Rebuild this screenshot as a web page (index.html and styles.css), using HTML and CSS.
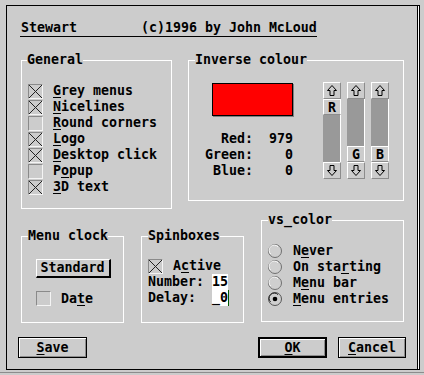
FILE: index.html
```html
<!DOCTYPE html>
<html>
<head>
<meta charset="utf-8">
<link rel="stylesheet" href="styles.css">
</head>
<body>
<div class="screen">
  <div class="dialog">
    <div class="title">Stewart        (c)1996 by John McLoud</div>

    <div class="row1">
      <fieldset class="grp general">
        <legend class="lg lg-general">General</legend>
        <div class="body general-body">
          <div class="item"><span class="cb"><svg class="x" width="13" height="13" viewBox="0 0 13 13"><path d="M0 0L13 13M13 0L0 13" stroke="#222" stroke-width="1"/></svg></span><span><u class="k">G</u>rey menus</span></div>
          <div class="item"><span class="cb"><svg class="x" width="13" height="13" viewBox="0 0 13 13"><path d="M0 0L13 13M13 0L0 13" stroke="#222" stroke-width="1"/></svg></span><span><u class="k">N</u>icelines</span></div>
          <div class="item"><span class="cb"></span><span><u class="k">R</u>ound corners</span></div>
          <div class="item"><span class="cb"><svg class="x" width="13" height="13" viewBox="0 0 13 13"><path d="M0 0L13 13M13 0L0 13" stroke="#222" stroke-width="1"/></svg></span><span><u class="k">L</u>ogo</span></div>
          <div class="item"><span class="cb"><svg class="x" width="13" height="13" viewBox="0 0 13 13"><path d="M0 0L13 13M13 0L0 13" stroke="#222" stroke-width="1"/></svg></span><span><u class="k">D</u>esktop click</span></div>
          <div class="item"><span class="cb"></span><span>P<u class="k">o</u>pup</span></div>
          <div class="item"><span class="cb"><svg class="x" width="13" height="13" viewBox="0 0 13 13"><path d="M0 0L13 13M13 0L0 13" stroke="#222" stroke-width="1"/></svg></span><span><u class="k">3</u>D text</span></div>
        </div>
      </fieldset>

      <fieldset class="grp inverse">
        <legend class="lg lg-inverse">Inverse colour</legend>
        <div class="body inverse-body">
          <div class="colinfo">
            <div class="swatch"></div>
            <div class="values">
              <div class="vline">  Red:  979</div>
              <div class="vline">Green:    0</div>
              <div class="vline"> Blue:    0</div>
            </div>
          </div>
          <div class="sliders">
            <div class="slider">
              <div class="arr"><svg width="10" height="11" viewBox="0 0 10 11"><path d="M5 0.5L9.5 5.5L7 5.5L7 10.5L3 10.5L3 5.5L0.5 5.5Z" fill="none" stroke="#000"/></svg></div>
              <div class="track">
                <div class="thumb">R</div>
                <div class="fill"></div>
              </div>
              <div class="arr"><svg width="10" height="11" viewBox="0 0 10 11"><path d="M5 10.5L9.5 5.5L7 5.5L7 0.5L3 0.5L3 5.5L0.5 5.5Z" fill="none" stroke="#000"/></svg></div>
            </div>
            <div class="slider">
              <div class="arr"><svg width="10" height="11" viewBox="0 0 10 11"><path d="M5 0.5L9.5 5.5L7 5.5L7 10.5L3 10.5L3 5.5L0.5 5.5Z" fill="none" stroke="#000"/></svg></div>
              <div class="track">
                <div class="fill"></div>
                <div class="thumb">G</div>
              </div>
              <div class="arr"><svg width="10" height="11" viewBox="0 0 10 11"><path d="M5 10.5L9.5 5.5L7 5.5L7 0.5L3 0.5L3 5.5L0.5 5.5Z" fill="none" stroke="#000"/></svg></div>
            </div>
            <div class="slider">
              <div class="arr"><svg width="10" height="11" viewBox="0 0 10 11"><path d="M5 0.5L9.5 5.5L7 5.5L7 10.5L3 10.5L3 5.5L0.5 5.5Z" fill="none" stroke="#000"/></svg></div>
              <div class="track">
                <div class="fill"></div>
                <div class="thumb">B</div>
              </div>
              <div class="arr"><svg width="10" height="11" viewBox="0 0 10 11"><path d="M5 10.5L9.5 5.5L7 5.5L7 0.5L3 0.5L3 5.5L0.5 5.5Z" fill="none" stroke="#000"/></svg></div>
            </div>
          </div>
        </div>
      </fieldset>
    </div>

    <div class="row2">
      <fieldset class="grp clock">
        <legend class="lg lg-clock">Menu clock</legend>
        <div class="body clock-body">
          <div class="std">Standard</div>
          <div class="item date"><span class="cb"></span><span>Da<u class="k">t</u>e</span></div>
        </div>
      </fieldset>

      <fieldset class="grp spin">
        <legend class="lg lg-spin">Spinboxes</legend>
        <div class="body spin-body">
          <div class="item"><span class="cb"><svg class="x" width="13" height="13" viewBox="0 0 13 13"><path d="M0 0L13 13M13 0L0 13" stroke="#222" stroke-width="1"/></svg></span><span>A<u class="k">c</u>tive</span></div>
          <div class="fline"><span class="flabel">Number: </span><span class="fld">15</span></div>
          <div class="fline"><span class="flabel">Delay:  </span><span class="fld cursor">_0</span></div>
        </div>
      </fieldset>

      <fieldset class="grp vs">
        <legend class="lg lg-vs">vs_color</legend>
        <div class="body vs-body">
          <div class="ritem"><svg class="radio" width="14" height="14" viewBox="0 0 14 14"><circle cx="7" cy="7" r="6.5" fill="#cfcfcf" stroke="#6f6f6f"/><path d="M2.6 10A5.2 5.2 0 0 1 10 2.6" fill="none" stroke="#fff"/></svg><span>N<u class="k">e</u>ver</span></div>
          <div class="ritem"><svg class="radio" width="14" height="14" viewBox="0 0 14 14"><circle cx="7" cy="7" r="6.5" fill="#cfcfcf" stroke="#6f6f6f"/><path d="M2.6 10A5.2 5.2 0 0 1 10 2.6" fill="none" stroke="#fff"/></svg><span>On sta<u class="k">r</u>ting</span></div>
          <div class="ritem"><svg class="radio" width="14" height="14" viewBox="0 0 14 14"><circle cx="7" cy="7" r="6.5" fill="#cfcfcf" stroke="#6f6f6f"/><path d="M2.6 10A5.2 5.2 0 0 1 10 2.6" fill="none" stroke="#fff"/></svg><span>M<u class="k">e</u>nu bar</span></div>
          <div class="ritem"><svg class="radio" width="14" height="14" viewBox="0 0 14 14"><circle cx="7" cy="7" r="6.5" fill="#cfcfcf" stroke="#555"/><path d="M2.6 10A5.2 5.2 0 0 1 10 2.6" fill="none" stroke="#222"/><circle cx="7" cy="7" r="2.3" fill="#000"/></svg><span><u class="k">M</u>enu entries</span></div>
        </div>
      </fieldset>
    </div>

    <div class="buttons">
      <div class="btn save"><span><u class="k">S</u>ave</span></div>
      <div class="btn ok"><span><u class="k">O</u>K</span></div>
      <div class="btn cancel"><span><u class="k">C</u>ancel</span></div>
    </div>
  </div>
</div>
</body>
</html>
```

FILE: styles.css
```css
html, body {
  margin: 0;
  padding: 0;
  background: #cccccc;
}

body {
  font: bold 13.29px/16px "DejaVu Sans Mono", "Liberation Mono", monospace;
  color: #000;
}

.screen {
  width: 424px;
  height: 373px;
  box-sizing: border-box;
  padding: 5px 0 0 6px;
  border-bottom: 1px solid #8c8c8c;
}

.dialog {
  width: 414px;
  height: 365px;
  box-sizing: border-box;
  border: 1px solid #000;
  box-shadow: inset -1px 0 0 #fff, inset -2px 0 0 #000;
}

.title {
  margin: 14px 0 0 13px;
  width: 296px;
  height: 16px;
  padding-left: 1px;
  white-space: pre;
  border-bottom: 1px solid #000;
}

.k {
  text-decoration: underline;
  text-decoration-thickness: 1px;
  text-underline-offset: 2px;
}

/* group boxes */
.grp {
  margin: 0;
  padding: 0;
  min-width: 0;
  border: 1px solid #fff;
  box-sizing: border-box;
}

.lg {
  padding: 0;
  line-height: 16px;
  white-space: pre;
}

.lg-general { margin-left: 5px; }
.lg-inverse { margin-left: 6px; }
.lg-clock { margin-left: 6px; }
.lg-spin { margin-left: 6px; }
.lg-vs { margin-left: 6px; }

.row1 {
  display: flex;
  align-items: flex-start;
  margin-top: 15px;
  padding-left: 14px;
  gap: 16px;
}

.general { width: 151px; }
.general-body { padding: 15px 0 13px 6px; }

.item {
  display: flex;
  align-items: flex-start;
  height: 16px;
  white-space: pre;
}

.cb {
  display: block;
  width: 15px;
  height: 15px;
  box-sizing: border-box;
  margin-top: 1px;
  margin-right: 10px;
  border-top: 1px solid #8a8a8a;
  border-left: 1px solid #8a8a8a;
  border-right: 1px solid #f4f4f4;
  border-bottom: 1px solid #f4f4f4;
  flex: none;
}

.x {
  display: block;
  shape-rendering: crispEdges;
}

.inverse { width: 216px; }
.inverse-body {
  display: flex;
  align-items: flex-start;
}

.colinfo {
  padding: 15px 0 21px 16px;
}

.swatch {
  margin-left: 7px;
  width: 81px;
  height: 33px;
  box-sizing: border-box;
  background: #ff0000;
  border: 1px solid #000;
  box-shadow: 1px 1px 0 #808080;
}

.values {
  margin-top: 15px;
}

.vline {
  height: 16px;
  white-space: pre;
}

.sliders {
  display: flex;
  gap: 6px;
  margin-left: 30px;
  padding-top: 14px;
}

.slider {
  display: flex;
  flex-direction: column;
  width: 18px;
}

.arr {
  height: 17px;
  box-sizing: border-box;
  display: flex;
  align-items: center;
  justify-content: center;
  border-top: 1px solid #fff;
  border-left: 1px solid #fff;
  border-right: 1px solid #8c8c8c;
  border-bottom: 1px solid #8c8c8c;
  background: #cccccc;
}

.track {
  height: 63px;
  display: flex;
  flex-direction: column;
}

.fill {
  flex: 1;
  background: #999999;
  border-right: 1px solid #fff;
}

.thumb {
  height: 16px;
  box-sizing: border-box;
  text-align: center;
  line-height: 15px;
  border-top: 1px solid #fff;
  border-left: 1px solid #fff;
  border-right: 1px solid #fff;
  border-bottom: 1px solid #8c8c8c;
  background: #cccccc;
}

/* row 2 */
.row2 {
  display: flex;
  align-items: flex-start;
  padding-left: 14px;
}

.clock {
  width: 103px;
  margin-top: 19px;
}

.clock-body {
  padding: 15px 0 15px 14px;
}

.std {
  width: 75px;
  height: 19px;
  box-sizing: border-box;
  border-top: 1px solid #fff;
  border-left: 1px solid #fff;
  border-right: 2px solid #000;
  border-bottom: 2px solid #000;
  text-align: center;
  line-height: 16px;
  padding-right: 1px;
}

.date {
  margin-top: 13px;
}

.date .cb {
  margin-top: 0;
}

.spin {
  width: 103px;
  margin-top: 19px;
  margin-left: 17px;
}

.spin-body {
  padding: 14px 0 16px 6px;
}

.fline {
  display: flex;
  height: 16px;
  white-space: pre;
}

.fld {
  display: block;
  width: 16px;
  height: 16px;
  background: #fff;
}

.cursor {
  border-right: 1px solid #005a00;
}

.vs {
  width: 143px;
  margin-top: 3px;
  margin-left: 17px;
}

.vs-body {
  padding: 15px 0 14px 6px;
}

.ritem {
  display: flex;
  align-items: flex-start;
  height: 16px;
  white-space: pre;
}

.radio {
  display: block;
  margin-top: 1px;
  margin-right: 11px;
  flex: none;
}

/* bottom buttons */
.buttons {
  display: flex;
  margin-top: 14px;
  padding: 0 13px 0 11px;
}

.btn {
  height: 21px;
  box-sizing: border-box;
  border: 1px solid #000;
  background: #cccccc;
  box-shadow: inset 1px 1px 0 #fff, inset -1px -1px 0 #8c8c8c;
  display: flex;
  align-items: center;
  justify-content: center;
}

.save { width: 69px; }
.ok {
  width: 69px;
  margin-left: auto;
  border-width: 2px;
}
.cancel {
  width: 68px;
  margin-left: 11px;
}
```
